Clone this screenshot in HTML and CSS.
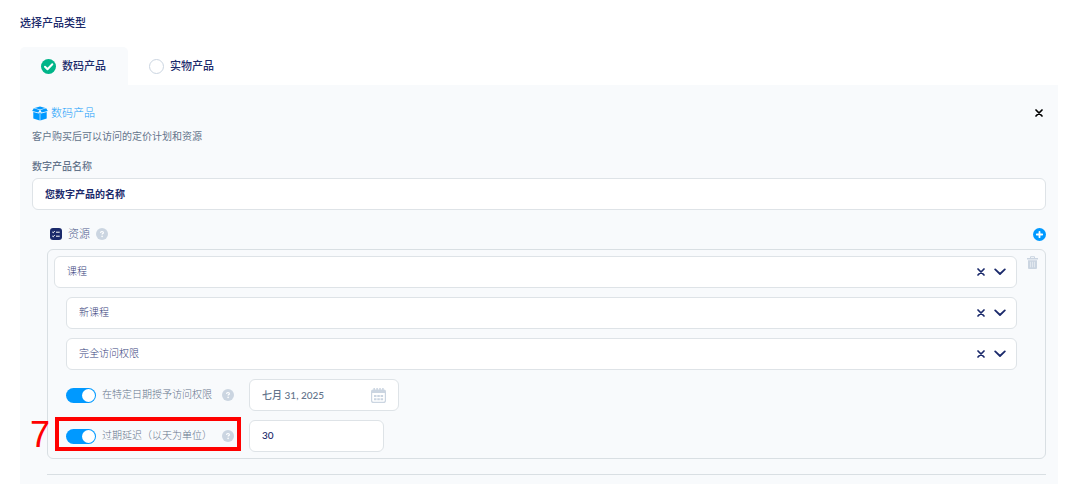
FILE: index.html
```html
<!DOCTYPE html>
<html lang="zh-CN">
<head>
  <meta charset="UTF-8" />
  <meta name="viewport" content="width=device-width, initial-scale=1.0" />
  <title>选择产品类型</title>
  <link rel="stylesheet" href="styles.css">
</head>
<body>
  <svg class="sprite" aria-hidden="true">
    <symbol id="icon-close" viewBox="0 0 8 8">
      <path d="M1 1l6 6M7 1L1 7" fill="none" stroke="currentColor" stroke-width="1.7" stroke-linecap="round" />
    </symbol>
    <symbol id="icon-chevron" viewBox="0 0 12 8">
      <path d="M1.2 1.4L6 6l4.800-4.600" fill="none" stroke="currentColor" stroke-width="1.8" stroke-linecap="round" stroke-linejoin="round" />
    </symbol>
    <symbol id="icon-help" viewBox="0 0 12 12">
      <circle cx="6" cy="6" r="6" fill="#cbd5e1" />
      <path d="M4.600 4.900c0-.9.600-1.400 1.400-1.400s1.400.5 1.400 1.200c0 .9-1.300.9-1.300 1.900" fill="none" stroke="#fff" stroke-width="1.200" />
      <circle cx="6.100" cy="8.400" r=".8" fill="#fff" />
    </symbol>
  </svg>

  <h1 class="page-title">选择产品类型</h1>

  <div class="tabs">
    <label class="tab active">
      <input type="radio" name="productType" checked />
      数码产品
    </label>
    <label class="tab">
      <input type="radio" name="productType" />
      实物产品
    </label>
  </div>

  <main class="panel">
    <div class="panel-header">
      <svg class="box-icon" viewBox="0 0 16 15" aria-hidden="true">
        <path d="M8 .4l5.400 1.500L8 3.500 2.600 1.900z" fill="#0099ff" />
        <path d="M1.800 2.300L7.600 4 6.300 6.600.2 4.900zM14.200 2.300L8.400 4l1.300 2.600 6.100-1.700z" fill="#0099ff" />
        <path d="M1.300 6.100l5.500 1.500.9-1.500v8.400l-6.400-1.900zM14.700 6.100L9.200 7.600l-.9-1.500v8.400l6.400-1.900z" fill="#0099ff" />
      </svg>
      <h2>数码产品</h2>
      <button type="button" class="icon-button close" aria-label="关闭">
        <svg width="8" height="8"><use href="#icon-close" /></svg>
      </button>
    </div>
    <p class="description">客户购买后可以访问的定价计划和资源</p>

    <label class="field-label" for="productName">数字产品名称</label>
    <input type="text" class="control product-name" id="productName" value="您数字产品的名称" />

    <section class="resources">
      <div class="resources-header">
        <svg width="12" height="12" viewBox="0 0 12 12" aria-hidden="true">
          <rect width="12" height="12" rx="3" fill="#1b2a6b" />
          <path d="M2.300 4l.9.8 1.500-1.700M2.300 8l.9.8 1.500-1.700M6 4.200h3.700M6 8.200h3.700" fill="none" stroke="#fff" stroke-width="1" />
        </svg>
        <h3>资源</h3>
        <svg width="12" height="12" aria-hidden="true"><use href="#icon-help" /></svg>
        <button type="button" class="icon-button add" aria-label="添加">
          <svg width="13" height="13" viewBox="0 0 13 13">
            <circle cx="6.500" cy="6.500" r="6.500" fill="#0099ff" />
            <path d="M6.500 3.800v5.400M3.800 6.500h5.400" stroke="#fff" stroke-width="1.800" stroke-linecap="round" />
          </svg>
        </button>
      </div>

      <div class="resource">
        <div class="resource-fields">
          <div class="select-box">
            <select class="control" aria-label="资源类型"><option>课程</option></select>
            <div class="select-icons">
              <button type="button" class="icon-button" aria-label="清除"><svg width="8" height="8"><use href="#icon-close" /></svg></button>
              <svg width="12" height="8"><use href="#icon-chevron" /></svg>
            </div>
          </div>
          <div class="select-box nested">
            <select class="control" aria-label="课程"><option>新课程</option></select>
            <div class="select-icons">
              <button type="button" class="icon-button" aria-label="清除"><svg width="8" height="8"><use href="#icon-close" /></svg></button>
              <svg width="12" height="8"><use href="#icon-chevron" /></svg>
            </div>
          </div>
          <div class="select-box nested">
            <select class="control" aria-label="访问权限"><option>完全访问权限</option></select>
            <div class="select-icons">
              <button type="button" class="icon-button" aria-label="清除"><svg width="8" height="8"><use href="#icon-close" /></svg></button>
              <svg width="12" height="8"><use href="#icon-chevron" /></svg>
            </div>
          </div>

          <div class="setting nested">
            <div class="setting-name">
              <input type="checkbox" class="toggle" id="grantDate" checked />
              <label for="grantDate">在特定日期授予访问权限</label>
              <svg width="12" height="12" aria-hidden="true"><use href="#icon-help" /></svg>
            </div>
            <div class="date-box">
              <input type="text" class="control" value="七月 31, 2025" aria-label="日期" />
              <svg class="calendar" viewBox="0 0 15 15" aria-hidden="true">
                <path d="M0 5V3.200Q0 1.500 2 1.500h11q2 0 2 1.700V5z" fill="#cbd5e1" />
                <path d="M3.200 0v2.500M6.100 0v2.500M9 0v2.500M11.900 0v2.500" stroke="#cbd5e1" stroke-width="1.500" />
                <path d="M.6 5v7.400q0 2 2 2h9.800q2 0 2-2V5" fill="none" stroke="#cbd5e1" stroke-width="1.200" />
                <path d="M3 8h2.500M6.300 8h2.500M9.600 8h2.500M3 11.300h2.500M6.300 11.300h2.500M9.600 11.300h2.500" stroke="#cbd5e1" stroke-width="1.900" />
              </svg>
            </div>
          </div>

          <div class="setting nested">
            <div class="setting-name">
              <input type="checkbox" class="toggle" id="expireDelay" checked />
              <label for="expireDelay">过期延迟（以天为单位）</label>
              <svg width="12" height="12" aria-hidden="true"><use href="#icon-help" /></svg>
              <div class="highlight"><span class="step">7</span></div>
            </div>
            <input type="text" class="control days" value="30" aria-label="过期延迟" />
          </div>
        </div>

        <button type="button" class="icon-button delete" aria-label="删除">
          <svg width="11" height="13" viewBox="0 0 11 13">
            <path d="M3.500 2V.7h4V2" fill="none" stroke="currentColor" />
            <path d="M0 2h11v1.500H0zM1 4.300h9V12q0 1-1 1H2q-1 0-1-1z" fill="currentColor" />
            <path d="M3.500 5.800v5.500M5.500 5.800v5.500M7.500 5.800v5.500" stroke="#f8fafc" stroke-width=".5" />
          </svg>
        </button>
      </div>
    </section>
    <hr />
  </main>
</body>
</html>
```

FILE: styles.css
```css
* {
  box-sizing: border-box;
}

body {
  margin: 0;
  padding: 15px 13px 0 20px;
  background: #fff;
  color: #1b2a6b;
  font-family: Lato, "Noto Sans CJK SC", sans-serif;
  font-size: 10px;
  line-height: 16px;
}

h1, h2, h3, p {
  margin: 0;
}

svg {
  display: block;
  flex-shrink: 0;
}

.sprite {
  position: absolute;
  width: 0;
  height: 0;
}

.page-title {
  font-size: 11px;
  font-weight: 500;
}

.tabs {
  display: flex;
  margin-top: 16px;
}

.tab {
  display: flex;
  align-items: center;
  gap: 6px;
  height: 38px;
  padding: 0 22px 0 21px;
  border-radius: 5px 5px 0 0;
  font-size: 11px;
  font-weight: 500;
  cursor: pointer;
}

.tab.active {
  background: #f8fafc;
}

.tab input {
  appearance: none;
  width: 15px;
  height: 15px;
  margin: 0;
  border: 1px solid #cbd5e1;
  border-radius: 50%;
  background: #fff;
}

.tab input:checked {
  border: none;
  background: #00b589 url("data:image/svg+xml,%3Csvg xmlns='http://www.w3.org/2000/svg' viewBox='0 0 15 15'%3E%3Cpath d='M4 7.800l2.500 2.500 4.800-5' fill='none' stroke='white' stroke-width='2' stroke-linecap='round' stroke-linejoin='round'/%3E%3C/svg%3E");
}

.panel {
  padding: 20px 12px 9px;
  background: #f8fafc;
}

.panel-header {
  display: flex;
  align-items: center;
  gap: 3px;
}

.panel-header h2 {
  color: #159dfa;
  font-size: 11px;
  font-weight: 300;
}

.box-icon {
  width: 16px;
  height: 15px;
}

.icon-button {
  display: flex;
  padding: 0;
  border: none;
  background: none;
  color: inherit;
  cursor: pointer;
}

.close {
  margin-left: auto;
  margin-right: 3px;
  color: #000;
}

.description {
  margin-top: 7px;
  color: #64748b;
}

.field-label {
  display: block;
  margin: 14px 0 4px;
  color: #64748b;
  font-weight: 500;
}

.control {
  display: block;
  width: 100%;
  height: 32px;
  padding: 0 12px 2px;
  border: 1px solid #dee3e7;
  border-radius: 6px;
  background: #fff;
  color: #1b2a6b;
  font: inherit;
}

.product-name {
  font-weight: 700;
}

.resources {
  padding-left: 15px;
}

.resources-header {
  display: flex;
  align-items: center;
  gap: 6px;
  margin: 16px 0 7px;
  padding-left: 3px;
}

.resources-header h3 {
  color: #4f5a8c;
  font-size: 11px;
  font-weight: 300;
}

.add {
  margin-left: auto;
}

.resource {
  display: flex;
  align-items: flex-start;
  gap: 10px;
  padding: 6px 7px 6px 6px;
  border: 1px solid #d9dfe3;
  border-radius: 6px;
}

.resource-fields {
  display: flex;
  flex: 1;
  flex-direction: column;
  gap: 9px;
}

.select-box,
.date-box {
  position: relative;
}

.select-box select {
  appearance: none;
  padding-right: 50px;
  color: #36427c;
  font-weight: 300;
}

.select-icons {
  position: absolute;
  top: 0;
  right: 11px;
  display: flex;
  align-items: center;
  gap: 9px;
  height: 32px;
  pointer-events: none;
}

.select-icons button {
  pointer-events: auto;
}

.nested {
  margin-left: 12px;
}

.setting {
  display: flex;
  align-items: center;
  gap: 15px;
}

.setting-name {
  position: relative;
  display: flex;
  align-items: center;
  width: 168px;
  color: #64748b;
  font-weight: 300;
}

.setting-name label {
  margin: 0 auto 0 6px;
  padding-bottom: 2px;
}

.toggle {
  appearance: none;
  width: 30px;
  height: 15px;
  margin: 0;
  padding: 1px;
  border-radius: 8px;
  background: #cbd5e1;
  cursor: pointer;
}

.toggle::before {
  content: "";
  display: block;
  width: 13px;
  height: 13px;
  border-radius: 50%;
  background: #fff;
}

.toggle:checked {
  background: #0099ff;
}

.toggle:checked::before {
  margin-left: auto;
}

.date-box {
  width: 150px;
}

.date-box .control {
  color: #64748b;
  font-weight: 500;
}

.calendar {
  position: absolute;
  top: 9px;
  right: 13px;
  width: 15px;
  height: 15px;
}

.days {
  width: 135px;
  font-weight: 500;
}

.delete {
  color: #cbd5e1;
}

/* step marker around the expiration setting */
.highlight {
  position: absolute;
  inset: -10px -7px -6px -11px;
  border: 4px solid #f00;
  pointer-events: none;
}

.step {
  position: absolute;
  right: 100%;
  bottom: -4px;
  margin-right: 9px;
  color: #f00;
  font-family: "Liberation Sans", Arial, sans-serif;
  font-size: 36px;
  font-weight: 400;
  line-height: 32px;
}

hr {
  margin: 15px 0 0 15px;
  border: none;
  border-top: 1px solid #d9dfe3;
}
```
